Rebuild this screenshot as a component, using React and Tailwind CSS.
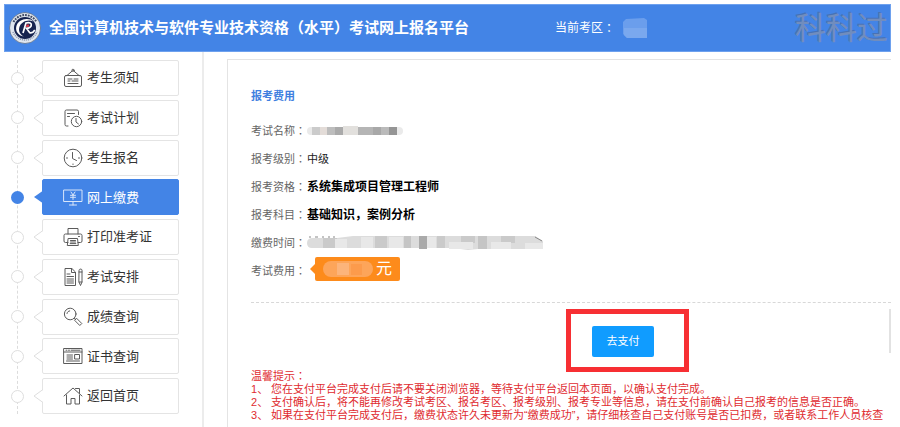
import React from "react";

const stroke = {
  fill: "none",
  stroke: "currentColor",
  strokeWidth: 1,
  strokeLinecap: "round",
  strokeLinejoin: "round",
};

function Icon({ children }) {
  return (
    <svg aria-hidden="true" viewBox="0 0 20 20" className="size-5 shrink-0 opacity-80" {...stroke}>
      {children}
    </svg>
  );
}

const icons = {
  notice: (
    <>
      <rect x="1.5" y="7.5" width="17" height="11" rx="1.5" />
      <path d="M4 7.5 9.2 3M16 7.5 10.8 3M5 11h4M11 11h4M5 13h2M9 13h6M5 15.5h10" />
      <circle cx="10" cy="2.3" r="1.1" />
    </>
  ),
  plan: (
    <>
      <path d="M15.500 6.500V3.500a1.500 1.500 0 0 0-1.500-1.500H3.500A1.500 1.500 0 0 0 2 3.500v13A1.500 1.500 0 0 0 3.500 18H5M4.500 5.500h7M4.500 8.500h2" />
      <circle cx="13.500" cy="13.500" r="5.200" />
      <path d="M13 10.500v3.500l2.500 2" />
    </>
  ),
  clock: (
    <>
      <circle cx="10" cy="10" r="8.800" />
      <path d="M9.500 4.500v6l4 2M3.500 10h1M15.500 10h1M10 16v.5" />
    </>
  ),
  pay: (
    <>
      <path d="M1 3h18v11.500H1zM10 14.500V18M6.500 18h7" />
      <path d="m8 5 2 3 2-3M7.500 8.300h5M7.500 10.300h5M10 8v4.500" />
    </>
  ),
  printer: (
    <>
      <path d="M5 7V1.500h10V7M5 15.500H2.500a1.500 1.500 0 0 1-1.500-1.500V8.500A1.500 1.500 0 0 1 2.500 7h15A1.500 1.500 0 0 1 19 8.500V14a1.500 1.500 0 0 1-1.500 1.500H15" />
      <path d="M5.500 11.500h9l.8 7H4.700zM7.500 13.500h5M7.500 15h5M7.200 16.600h5.600M15.500 9.500h1" />
    </>
  ),
  schedule: (
    <>
      <path d="M8.500 1.500H2v17h10.500v-13zM8.500 1.500v4h4M4 7h3M4 9.500h6.500M4 12h6.500M4 14h6.500M4 16h6.500" />
      <path d="M16 3.200c0-1.600 3-1.600 3 0V15l-1.500 3.500L16 15zM16 5h3M16 15h3" />
    </>
  ),
  search: (
    <>
      <circle cx="7.200" cy="7" r="5.800" />
      <path d="M4 6.500c.3-1.500 1.300-2.500 2.700-2.600M11.300 11.200l1.500 1.400M13.800 11.500l5 5-2 2-5-5z" />
    </>
  ),
  certificate: (
    <>
      <path d="M1 2.500h18v15H1zM1 6h18M3 4.200h1M5.500 4.200h1M8 4.200h9M4 9h5.500M4 11h5.500M4 13h5.500M3.500 15h13" />
      <path d="M12 8.500h4.500v4.500H12z" />
    </>
  ),
  home: (
    <>
      <path d="m1 10 9-8 9 8M3.500 9v9H8v-5.500h4V18h4.500V9" />
      <path d="M12.500 2.500h4V7.500" />
    </>
  ),
};

const menu = [
  ["notice", "考生须知"],
  ["plan", "考试计划"],
  ["clock", "考生报名"],
  ["pay", "网上缴费"],
  ["printer", "打印准考证"],
  ["schedule", "考试安排"],
  ["search", "成绩查询"],
  ["certificate", "证书查询"],
  ["home", "返回首页"],
];

function Colon() {
  return <span className="font-['Noto_Sans_CJK_TC',sans-serif]">：</span>;
}

function Logo() {
  return (
    <svg aria-hidden="true" viewBox="0 0 32 32" className="size-8 shrink-0">
      <circle cx="16" cy="16" r="15.500" fill="#dfe6ef" stroke="#4a5568" strokeWidth=".6" />
      <path d="M4.500 10a13 13 0 0 1 23 0" fill="none" stroke="#414b63" strokeWidth="2" strokeDasharray="1.800 1" />
      <path d="M4 20a13 13 0 0 0 24 0" fill="none" stroke="#8792a8" strokeWidth="1.500" strokeDasharray="1 1" />
      <circle cx="16" cy="16" r="11" fill="#17244f" />
      <path d="M24.500 9.500C19 4.500 8.500 7.500 7.200 15c-.9 5 3 8.800 7.500 9.500-3.500-2-5.400-5-4.400-9C11.700 10 18.500 7 24.500 9.500Z" fill="#fff" />
      <path d="m14 21 3-10c3.500-1 6 .3 5.200 2.700-.6 1.800-2.500 2.600-4.700 2.700l3.300 4.400c2 .6 3.700-.6 5-2.800" fill="none" stroke="#fff" strokeWidth="1.700" />
      <path d="M17.500 12.500h2.800l-.5 2.500h-3z" fill="#d83a4d" />
    </svg>
  );
}

function MenuItem({ icon, label, active }) {
  return (
    <li className="flex items-center">
      <span
        className={
          active
            ? "relative size-[13px] rounded-full bg-[#4384e6]"
            : "relative size-[13px] rounded-full border border-[#dedede] bg-white"
        }
      />
      <a
        href="#"
        aria-current={active ? "page" : undefined}
        className={
          active
            ? "relative ml-[18px] flex h-9 flex-1 items-center gap-1 rounded-xs border border-[#4384e6] bg-[#4384e6] pl-5 text-[13px] text-white"
            : "relative ml-[18px] flex h-9 flex-1 items-center gap-1 rounded-xs border border-[#e4e4e4] bg-white pl-5 text-[13px] text-[#333]"
        }
      >
        <svg aria-hidden="true" viewBox="0 0 11 14" className="absolute -left-[10px] top-[10px] h-3.5 w-[11px]">
          <path d="M11 0 1 7l10 7z" fill={active ? "#4384e6" : "#fff"} />
          {!active && <path d="M10 .5 1 7l9 6.500" fill="none" stroke="#dedede" />}
        </svg>
        <Icon>{icons[icon]}</Icon>
        <span>{label}</span>
      </a>
    </li>
  );
}

function Row({ label, children }) {
  return (
    <div className="flex h-7 items-center">
      <dt className="w-14 shrink-0 text-[#666]">
        {label}
        <Colon />
      </dt>
      <dd className="min-w-0">{children}</dd>
    </div>
  );
}

function NameMosaic() {
  return (
    <svg aria-hidden="true" viewBox="0 0 96 10" className="h-2.5 w-24">
      <rect y="1" width="96" height="8" rx="4" fill="#eaeaea" />
      <path d="M5 1h8v8H5z" fill="#cbcbcb" />
      <path d="M13 1h7v8h-7z" fill="#e3dcd8" />
      <path d="M20 1h8v8h-8z" fill="#bdbdbd" />
      <path d="M28 1h8v8h-8z" fill="#aaa" />
      <path d="M36 0h15v9H36z" fill="#e2e0dd" />
      <path d="M51 1h15v8H51z" fill="#b5b5b5" />
      <path d="M66 1h8v8h-8z" fill="#a8a8a8" />
      <path d="M74 1h8v8h-8z" fill="#bababa" />
      <path d="M82 1h8v8h-8z" fill="#959595" />
    </svg>
  );
}

function TimeMosaic() {
  return (
    <svg aria-hidden="true" viewBox="0 0 236 16" className="h-4 w-[236px]">
      <path d="M0 8q0-5 6-5h24l16-2h182l8 5v8h-65l-10 1-15-2H5q-5 0-5-5z" fill="#dcdcdc" />
      <path d="M16 3h14v10H16zM68 1h12v12H68zM130 1h8v12h-8zM154 1h14v7h-14zM194 1h14v7h-14z" fill="#cacaca" />
      <path d="M28 4h12v9H28zM54 2h12v11H54zM82 2h14v11H82zM120 2h9v11h-9zM142 7h24v7h-24zM184 7h20v7h-20zM218 8h18v6h-18z" fill="#e8e8e8" />
      <path d="M97 1h7v12h-7zM171 1h9v13h-9z" fill="#c5c5c5" />
      <path d="M112 1h8v13h-8z" fill="#aaa" />
      <path d="M2 2h2M8 2h3M15 2h2M21 2h2M26 2h2M228 2l7 4" stroke="#888" fill="none" />
    </svg>
  );
}

const tips = [
  "您在支付平台完成支付后请不要关闭浏览器，等待支付平台返回本页面，以确认支付完成。",
  "支付确认后，将不能再修改考试考区、报名考区、报考级别、报考专业等信息，请在支付前确认自己报考的信息是否正确。",
  "如果在支付平台完成支付后，缴费状态许久未更新为“缴费成功”，请仔细核查自己支付账号是否已扣费，或者联系工作人员核查",
];

export default function App() {
  return (
    <div className="flex min-h-screen flex-col overflow-hidden bg-white pt-1 pr-[9px] pl-1 font-['Liberation_Sans','Noto_Sans_CJK_SC',sans-serif]">
      <header className="flex h-12 items-center border border-[#6ea1ee] bg-[#4384e6] pl-1 text-white">
        <Logo />
        <h1 className="ml-2 shrink-0 text-[15px] font-bold whitespace-nowrap">
          全国计算机技术与软件专业技术资格<span className="font-['Noto_Sans_CJK_TC',sans-serif]">（</span>水平
          <span className="font-['Noto_Sans_CJK_TC',sans-serif]">）</span>考试网上报名平台
        </h1>
        <p className="ml-[86px] flex shrink-0 items-center text-xs whitespace-nowrap">
          当前考区
          <Colon />
          <svg aria-hidden="true" viewBox="0 0 24 20" className="ml-2 h-5 w-6">
            <path d="M3 1 21 0l3 2v18H4l-4-4V4z" fill="#6b9eec" />
            <path d="M1 10h23v10H4l-3-3z" fill="#7aa8ee" />
          </svg>
        </p>
        <p className="mr-0.5 ml-auto shrink-0 text-[31px] leading-none whitespace-nowrap text-[#718dbd] [text-shadow:-1px_-1px_0_#4871b5]">
          科科过
        </p>
      </header>

      <div className="flex flex-1">
        <nav aria-label="报名菜单" className="w-[200px] shrink-0 border-r-2 border-[#ececec] pt-2 pl-[7px]">
          <ul className="relative mr-[23px] flex h-[354px] flex-col justify-between before:absolute before:inset-y-0 before:left-1.5 before:border-l before:border-dashed before:border-[#dcdcdc]">
            {menu.map(([icon, label]) => (
              <MenuItem key={icon} icon={icon} label={label} active={icon === "pay"} />
            ))}
          </ul>
        </nav>

        <main className="mt-[7px] ml-[23px] min-w-0 flex-1 border-t border-l border-[#e4e4e4] pl-[23px] text-[11px]">
          <h2 className="mt-[26px] leading-5 font-bold text-[#3f80df]">报考费用</h2>
          <dl className="mt-[11px]">
            <Row label="考试名称">
              <NameMosaic />
            </Row>
            <Row label="报考级别">
              <span className="text-[#222]">中级</span>
            </Row>
            <Row label="报考资格">
              <strong className="text-xs font-bold text-black">系统集成项目管理工程师</strong>
            </Row>
            <Row label="报考科目">
              <strong className="text-xs font-bold text-black">基础知识，案例分析</strong>
            </Row>
            <Row label="缴费时间">
              <TimeMosaic />
            </Row>
            <Row label="考试费用">
              <span className="relative mb-1 ml-2 flex h-6 w-[85px] items-center justify-between rounded-xs bg-[#fd8b1b] px-2 text-base text-white">
                <svg aria-hidden="true" viewBox="0 0 6 12" className="absolute top-1.5 -left-[5px] h-3 w-1.5">
                  <path d="M6 0 0 6l6 6z" fill="#fd8b1b" />
                </svg>
                <svg aria-hidden="true" viewBox="0 0 50 16" className="h-4 w-[50px]">
                  <rect width="50" height="16" rx="8" fill="#fda55a" />
                  <path d="M14 2h12v12H14z" fill="#fcb47b" />
                  <path d="M28 3h11v11H28z" fill="#fc9b4c" />
                </svg>
                元
              </span>
            </Row>
          </dl>

          <div className="mt-[17px] flex border-t border-dashed border-[#d8d8d8] pt-1.5">
            <div className="ml-[315px] border-5 border-[#f72f33] pt-3 pr-[30px] pb-2.5 pl-[21px]">
              <button type="button" className="block h-[31px] w-[62px] rounded-xs bg-[#109cff] text-[11px] text-white">
                去支付
              </button>
            </div>
            <span className="ml-auto h-11 w-0.5 bg-[#e2e2e2]" />
          </div>

          <section className="-mt-[3px] leading-[13px] text-[#e02b2f]">
            <h3>
              温馨提示
              <Colon />
            </h3>
            <ol>
              {tips.map((tip, i) => (
                <li key={tip} className="flex whitespace-nowrap">
                  <span className="w-5 shrink-0">{i + 1}、</span>
                  <span>{tip}</span>
                </li>
              ))}
            </ol>
          </section>
        </main>
      </div>
    </div>
  );
}
